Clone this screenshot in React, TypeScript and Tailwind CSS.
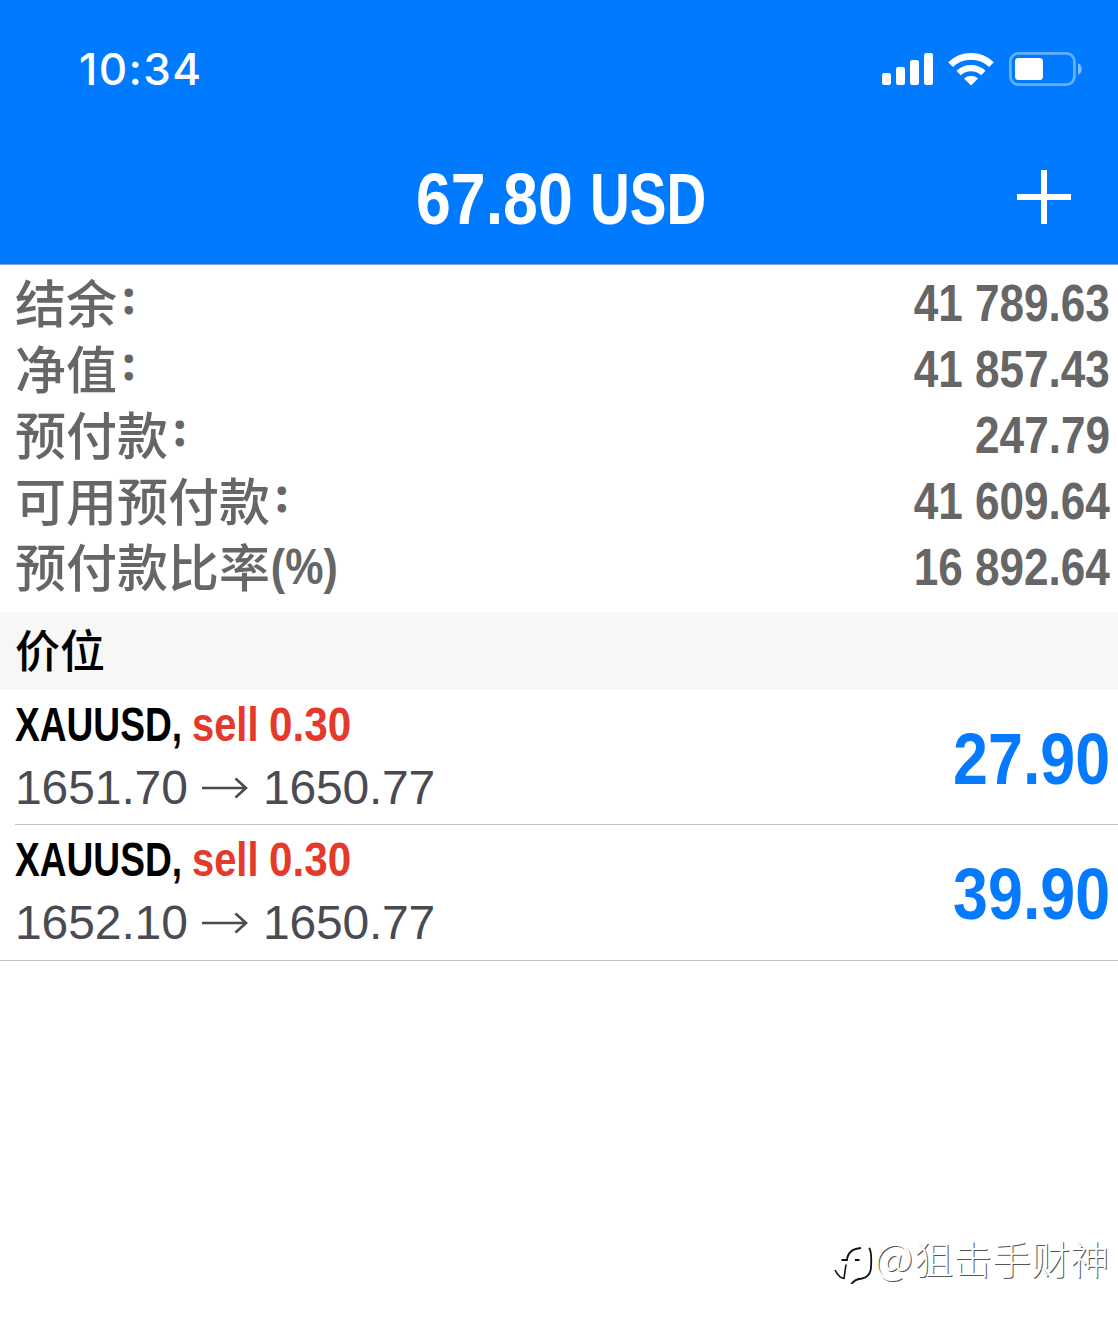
import type { ReactNode } from "react";

type Position = {
  id: number;
  symbol: string;
  side: string;
  volume: string;
  open: string;
  current: string;
  profit: string;
};

const SUMMARY = [
  { label: "结余", suffix: "：", value: "41 789.63" },
  { label: "净值", suffix: "：", value: "41 857.43" },
  { label: "预付款", suffix: "：", value: "247.79" },
  { label: "可用预付款", suffix: "：", value: "41 609.64" },
  { label: "预付款比率", suffix: "(%)", value: "16 892.64" },
];

const POSITIONS: Position[] = [
  { id: 1, symbol: "XAUUSD,", side: "sell", volume: "0.30", open: "1651.70", current: "1650.77", profit: "27.90" },
  { id: 2, symbol: "XAUUSD,", side: "sell", volume: "0.30", open: "1652.10", current: "1650.77", profit: "39.90" },
];

// Bold grotesque squeezed sideways; the class gives the box width and the scale.
function Condensed({ className, children }: { className: string; children: ReactNode }) {
  return (
    <span
      className={`block shrink-0 whitespace-nowrap font-['Liberation_Sans',sans-serif] font-bold ${className}`}
    >
      {children}
    </span>
  );
}

function StatusIcons() {
  return (
    <svg className="h-[36px] w-[202px]" viewBox="880 51 202 36" fill="none">
      <g fill="#fff">
        <rect x="882" y="73" width="9" height="12" rx="2.2" />
        <rect x="896" y="67" width="9" height="18" rx="2.2" />
        <rect x="910" y="60" width="9" height="25" rx="2.2" />
        <rect x="924" y="53" width="9" height="32" rx="2.2" />
      </g>
      <path d="M950.6 64.6a29.5 29.5 0 0 1 40.8 0" stroke="#fff" strokeWidth="6.8" />
      <path d="M958.6 73a18 18 0 0 1 24.8 0" stroke="#fff" strokeWidth="6.2" />
      <path d="M964 78.6a9.8 9.8 0 0 1 14 0L971 85.4z" fill="#fff" />
      <rect x="1010.4" y="53.4" width="64" height="31.2" rx="8" stroke="#fff" strokeOpacity=".4" strokeWidth="2.8" />
      <rect x="1015" y="58" width="28" height="22" rx="3.5" fill="#fff" />
      <path d="M1078 63.2a6.4 6.4 0 0 1 0 11.6z" fill="#fff" fillOpacity=".5" />
    </svg>
  );
}

function Arrow() {
  return (
    <svg className="h-[22px] w-[46px]" viewBox="0 0 46 22" fill="none" stroke="#4a4a52" strokeWidth="2.6">
      <path d="M0 11h44M33.5 1.5L44 11 33.5 20.5" />
    </svg>
  );
}

function PositionRow({ position, last }: { position: Position; last: boolean }) {
  return (
    <li className={last ? "border-b border-[#c4c4c6]" : "pl-[15px]"}>
      <div
        className={`flex h-[135px] justify-between pr-[8px] ${
          last ? "pl-[15px]" : "border-b border-[#c4c4c6]"
        }`}
      >
        <div>
          <div className="flex h-[62px] items-end text-[48px] leading-[54px]">
            <Condensed className="w-[177px] origin-left scale-x-[.773] text-black">{position.symbol}</Condensed>
            <Condensed className="w-[77px] origin-left scale-x-[.83] text-[#e5392b]">{position.side}</Condensed>
            <Condensed className="origin-left scale-x-[.88] text-[#e5392b]">{position.volume}</Condensed>
          </div>
          <div className="flex h-[72px] items-center font-['Liberation_Sans',sans-serif] text-[48px] text-[#4a4a52]">
            <span className="w-[187px] tracking-[-0.1px]">{position.open}</span>
            <Arrow />
            <span className="pl-[15px] tracking-[-0.2px]">{position.current}</span>
          </div>
        </div>
        <Condensed className="origin-right scale-x-[.872] text-[72px] leading-[139px] text-[#057aff]">
          {position.profit}
        </Condensed>
      </div>
    </li>
  );
}

function Watermark() {
  return (
    <div className="flex items-center justify-end pr-[9px]">
      <svg className="h-[54px] w-[42px]" viewBox="0 0 42 54" fill="none" stroke="#111">
        <path d="M3 40q4 8 9 8.500l2-14" strokeWidth="1.6" />
        <path d="M9.500 30h5.500q1-11 14-12" strokeWidth="1.8" />
        <path d="M23 30h4.500" strokeWidth="2" />
        <path d="M37 18q3 3 2 20-1 9-9 10.500-7 .500-11 6" strokeWidth="1.8" />
      </svg>
      <span className="flex font-['Noto_Sans_CJK_SC',sans-serif] text-[39px] font-light leading-[60px] text-white [text-shadow:1px_1px_0_#555]">
        <span className="w-[40px] text-[43px] leading-[56px]">@</span>
        <span>狙击手财神</span>
      </span>
    </div>
  );
}

export default function App() {
  return (
    <div className="flex h-[1323px] w-[1118px] flex-col overflow-hidden bg-white">
      <header className="h-[265px] shrink-0 border-b border-[#7fa9d8] bg-[#007aff] text-white">
        <div className="flex h-[138px] items-center justify-between pl-[79px] pr-[36px]">
          <span className="font-['Inter',sans-serif] text-[44px] font-medium tracking-[1.4px]">10:34</span>
          <StatusIcons />
        </div>
        <div className="grid h-[118px] grid-cols-[416px_1fr_101px] items-center">
          <h1 className="col-start-2 flex pt-[2px] text-[72px] leading-[118px]">
            <Condensed className="w-[174px] origin-left scale-x-[.87]">67.80</Condensed>
            <Condensed className="origin-left scale-x-[.765]">USD</Condensed>
          </h1>
          <button aria-label="新订单" className="pb-[2px]">
            <svg className="size-[54px]" viewBox="0 0 54 54" stroke="#fff" strokeWidth="6">
              <path d="M27 0v54M0 27h54" />
            </svg>
          </button>
        </div>
      </header>

      <dl className="h-[347px] shrink-0 pt-[6px] text-[#666]">
        {SUMMARY.map((row) => (
          <div key={row.label} className="flex h-[66px] justify-between pl-[15px] pr-[8px]">
            <dt className="flex items-start font-['Noto_Sans_CJK_SC',sans-serif] text-[51px] font-medium">
              <span className="leading-[60px]">{row.label}</span>
              {row.suffix === "：" ? (
                <span className="pl-[3px] text-[35px] font-bold leading-[54px] [-webkit-text-stroke:1.8px_#666]">
                  ：
                </span>
              ) : (
                <Condensed className="origin-left scale-x-[.86] pl-px text-[50px] leading-[64px]">
                  {row.suffix}
                </Condensed>
              )}
            </dt>
            <dd>
              <Condensed className="origin-right scale-x-[.865] text-[51px] leading-[66px]">{row.value}</Condensed>
            </dd>
          </div>
        ))}
      </dl>

      <h2 className="h-[78px] shrink-0 bg-[#f7f7f7] pl-[15px] font-['Noto_Sans_CJK_SC',sans-serif] text-[45px] font-medium leading-[74px] text-black">
        价位
      </h2>
      <ul>
        {POSITIONS.map((position, i) => (
          <PositionRow key={position.id} position={position} last={i === POSITIONS.length - 1} />
        ))}
      </ul>

      <footer className="mt-auto pb-[36px]">
        <Watermark />
      </footer>
    </div>
  );
}
